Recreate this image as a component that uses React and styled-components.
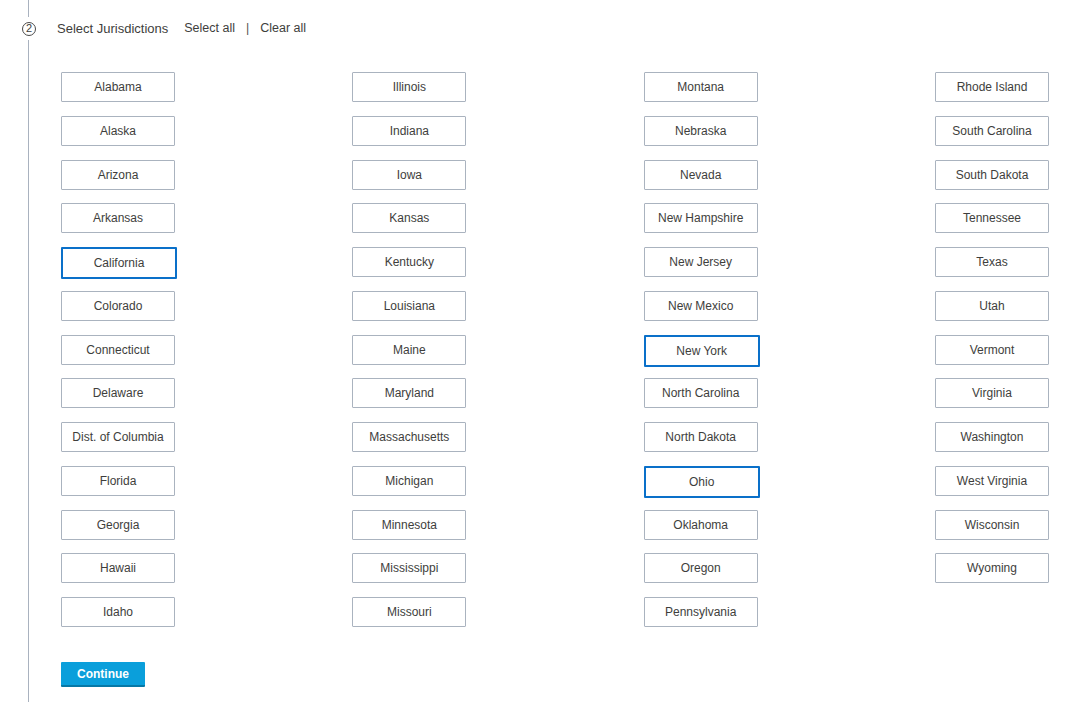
import React from 'react';
import styled, { createGlobalStyle } from 'styled-components';

const GlobalStyle = createGlobalStyle`
  html, body {
    margin: 0;
    padding: 0;
    background: #fff;
    font-family: "Liberation Sans", Arial, sans-serif;
  }
`;

const Step = styled.section`
  position: relative;
  margin-left: 28px;
  border-left: 1px solid #a9b2bf;
  min-height: 702px;
  box-sizing: border-box;
  padding-left: 28px;
  padding-top: 20px;
`;

const StepNumber = styled.span`
  position: absolute;
  left: -10px;
  top: 17px;
  width: 20px;
  height: 23px;
  display: flex;
  align-items: center;
  justify-content: center;
  background: #fff;
`;

const StepCircle = styled.span`
  box-sizing: border-box;
  width: 14px;
  height: 14px;
  border: 1px solid #4a4a4a;
  border-radius: 50%;
  display: flex;
  align-items: center;
  justify-content: center;
  font-size: 11px;
  line-height: 1;
  color: #3e3e3c;
`;

const Header = styled.div`
  display: flex;
  align-items: center;
  height: 16px;
  font-size: 12.5px;
  color: #3e3e3c;
`;

const Title = styled.span`
  margin-right: 16px;
  font-size: 13px;
`;

const LinkText = styled.a`
  color: #3e3e3c;
  text-decoration: none;
  cursor: pointer;
`;

const Divider = styled.span`
  margin: 0 11px;
  color: #555;
`;

const Grid = styled.div`
  margin: 36px 0 0 4px;
  width: 989px;
  display: grid;
  grid-template-columns: repeat(4, 115px);
  grid-template-rows: repeat(13, 30px);
  grid-auto-flow: column;
  justify-content: space-between;
  row-gap: 13.75px;
`;

const StateButton = styled.button`
  box-sizing: border-box;
  width: ${(p) => (p.$selected ? '116px' : '114px')};
  height: ${(p) => (p.$selected ? '32px' : '30px')};
  margin-bottom: ${(p) => (p.$selected ? '-2px' : '0')};
  padding: 0;
  background: #fff;
  border: ${(p) => (p.$selected ? '2px solid #0a70c9' : '1px solid #aab3bf')};
  border-radius: 1px;
  font-family: "Liberation Sans", Arial, sans-serif;
  font-size: 12px;
  color: #3e3e3c;
  cursor: pointer;
  white-space: nowrap;
`;

const ContinueButton = styled.button`
  margin: 35px 0 0 4px;
  width: 84px;
  height: 25px;
  padding: 0;
  box-sizing: border-box;
  background: #0a9fdb;
  border: none;
  border-bottom: 2px solid #0678a6;
  border-radius: 1px;
  color: #fff;
  font-family: "Liberation Sans", Arial, sans-serif;
  font-weight: bold;
  font-size: 12px;
  cursor: pointer;
`;

const states = [
  'Alabama', 'Alaska', 'Arizona', 'Arkansas', 'California', 'Colorado', 'Connecticut',
  'Delaware', 'Dist. of Columbia', 'Florida', 'Georgia', 'Hawaii', 'Idaho',
  'Illinois', 'Indiana', 'Iowa', 'Kansas', 'Kentucky', 'Louisiana', 'Maine',
  'Maryland', 'Massachusetts', 'Michigan', 'Minnesota', 'Mississippi', 'Missouri',
  'Montana', 'Nebraska', 'Nevada', 'New Hampshire', 'New Jersey', 'New Mexico', 'New York',
  'North Carolina', 'North Dakota', 'Ohio', 'Oklahoma', 'Oregon', 'Pennsylvania',
  'Rhode Island', 'South Carolina', 'South Dakota', 'Tennessee', 'Texas', 'Utah', 'Vermont',
  'Virginia', 'Washington', 'West Virginia', 'Wisconsin', 'Wyoming',
];

const selected = ['California', 'New York', 'Ohio'];

const App = () => {
  return (
    <>
      <GlobalStyle />
      <Step>
        <StepNumber>
          <StepCircle>2</StepCircle>
        </StepNumber>
        <Header>
          <Title>Select Jurisdictions</Title>
          <LinkText>Select all</LinkText>
          <Divider>|</Divider>
          <LinkText>Clear all</LinkText>
        </Header>
        <Grid>
          {states.map((s) => (
            <StateButton key={s} $selected={selected.includes(s)}>
              {s}
            </StateButton>
          ))}
        </Grid>
        <ContinueButton>Continue</ContinueButton>
      </Step>
    </>
  );
};

export default App;
